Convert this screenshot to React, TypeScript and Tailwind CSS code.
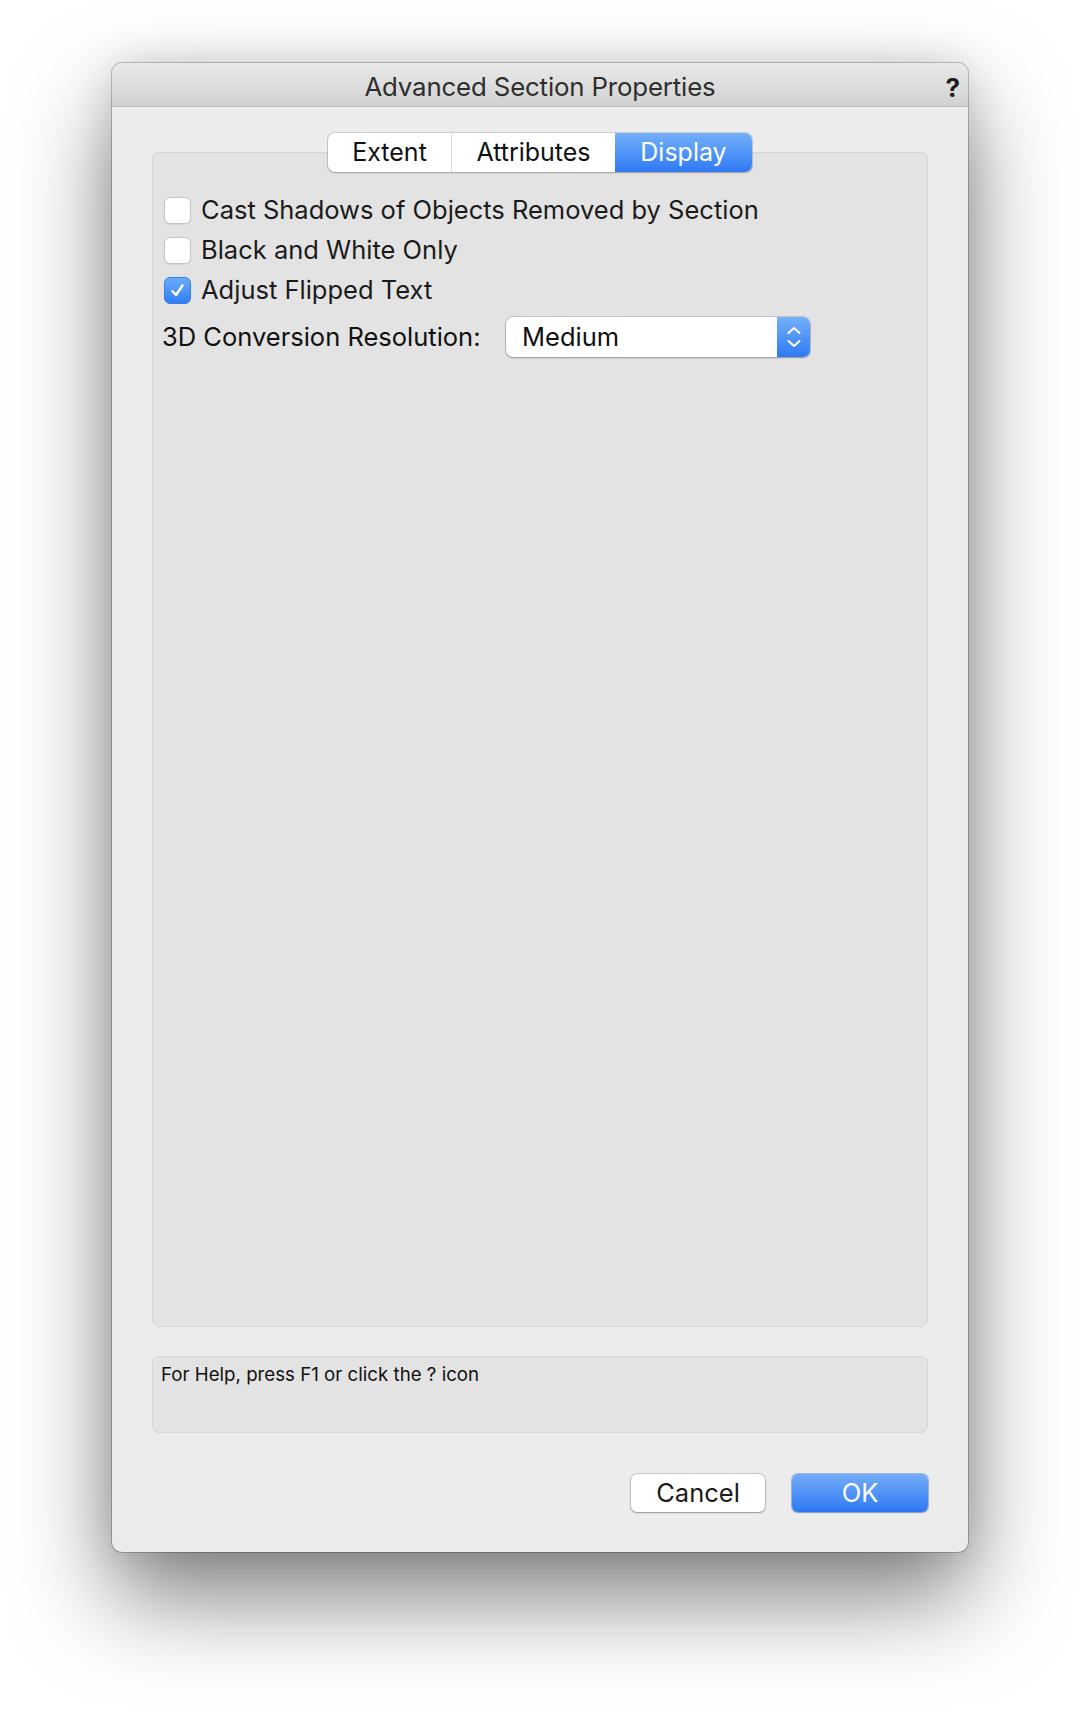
import React from "react";

const font = { fontFamily: "Inter, 'Noto Sans', sans-serif" };

function Checkbox({ checked }: { checked?: boolean }) {
  if (checked) {
    return (
      <div className="w-[27px] h-[27px] rounded-[6px] bg-gradient-to-b from-[#6aacf9] to-[#2f7df6] border border-[#3a7fe0] flex items-center justify-center shrink-0">
        <svg width="17" height="17" viewBox="0 0 17 17">
          <path d="M3.5 9.2 L7 13 L13.5 3.5" fill="none" stroke="white" strokeWidth="2.4" strokeLinecap="round" strokeLinejoin="round" />
        </svg>
      </div>
    );
  }
  return <div className="w-[27px] h-[27px] rounded-[6px] bg-white border border-[#c4c4c4] shadow-[0_1px_1px_rgba(0,0,0,0.06)] shrink-0" />;
}

export default function App() {
  return (
    <div className="w-[1080px] h-[1712px] bg-white pt-[63px] pl-[112px]" style={font}>
      <div className="w-[856px] h-[1489px] rounded-[10px] bg-[#ececec] flex flex-col shadow-[0_0_0_1px_rgba(0,0,0,0.22),0_45px_95px_rgba(0,0,0,0.5),0_0_40px_rgba(0,0,0,0.12)] overflow-hidden">
        {/* title bar */}
        <div className="h-[44px] shrink-0 bg-gradient-to-b from-[#e9e9e9] to-[#d2d2d2] border-b border-[#b9b9b9] flex items-center relative">
          <div className="flex-1 text-center text-[25.8px] text-[#2e2e2e] tracking-[-0.15px] pt-[6px]">Advanced Section Properties</div>
          <div className="absolute right-[8px] top-[5px] text-[26px] font-bold text-[#1e1e1e]">?</div>
        </div>
        {/* body */}
        <div className="flex-1 flex flex-col px-[40px] pt-[26px] pb-[40px]">
          <div className="self-center z-10 flex h-[39px] rounded-[7px] bg-white shadow-[0_0_0_1px_rgba(0,0,0,0.12),0_1px_2px_rgba(0,0,0,0.2)] text-[25px]">
            <div className="w-[124px] flex items-center justify-center text-[#111] border-r border-[#d8d8d8]">Extent</div>
            <div className="w-[163px] flex items-center justify-center text-[#111]">Attributes</div>
            <div className="w-[137px] flex items-center justify-center text-white rounded-r-[7px] bg-gradient-to-b from-[#73b0f9] to-[#2f78f4]">Display</div>
          </div>
          <div className="-mt-[20px] h-[1175px] rounded-[7px] bg-[#e3e3e3] border border-[#d6d6d6] pt-[44px] pl-[11px] flex flex-col">
            <div className="flex flex-col gap-[13px] text-[25.5px] text-[#1b1b1b]">
              <div className="flex items-center gap-[10px] h-[27px]"><Checkbox /><span>Cast Shadows of Objects Removed by Section</span></div>
              <div className="flex items-center gap-[10px] h-[27px]"><Checkbox /><span>Black and White Only</span></div>
              <div className="flex items-center gap-[10px] h-[27px]"><Checkbox checked /><span>Adjust Flipped Text</span></div>
            </div>
            <div className="flex items-center mt-[13px] h-[40px]">
              <span className="text-[25.5px] text-[#111] w-[344px] -ml-[2px]">3D Conversion Resolution:</span>
              <div className="w-[304px] h-[40px] rounded-[7px] bg-white shadow-[0_0_0_1px_rgba(0,0,0,0.13),0_1px_2px_rgba(0,0,0,0.25)] flex overflow-hidden">
                <div className="flex-1 flex items-center pl-[16px] text-[25.5px] text-[#111]">Medium</div>
                <div className="w-[33px] bg-gradient-to-b from-[#73b0f9] to-[#2f78f4] flex items-center justify-center">
                  <svg width="18" height="26" viewBox="0 0 18 26">
                    <path d="M3.5 9 L9 4 L14.5 9" fill="none" stroke="white" strokeWidth="2" strokeLinecap="round" strokeLinejoin="round" />
                    <path d="M3.5 17 L9 22 L14.5 17" fill="none" stroke="white" strokeWidth="2" strokeLinecap="round" strokeLinejoin="round" />
                  </svg>
                </div>
              </div>
            </div>
          </div>
          <div className="mt-[29px] h-[77px] rounded-[7px] bg-[#e3e3e3] border border-[#d6d6d6] px-[8px] pt-[4px] text-[18.7px] text-[#111]">
            For Help, press F1 or click the ? icon
          </div>
          <div className="flex justify-end gap-[27px] mt-[41px]">
            <div className="w-[134px] h-[38px] rounded-[6px] bg-white shadow-[0_0_0_1px_rgba(0,0,0,0.15),0_1px_2px_rgba(0,0,0,0.25)] flex items-center justify-center text-[25.5px] text-[#1b1b1b]">Cancel</div>
            <div className="w-[136px] h-[38px] rounded-[6px] bg-gradient-to-b from-[#73adf7] to-[#2e77f3] shadow-[0_0_0_1px_rgba(30,90,200,0.35),0_1px_2px_rgba(0,0,0,0.2)] flex items-center justify-center text-[25.5px] text-white">OK</div>
          </div>
        </div>
      </div>
    </div>
  );
}
